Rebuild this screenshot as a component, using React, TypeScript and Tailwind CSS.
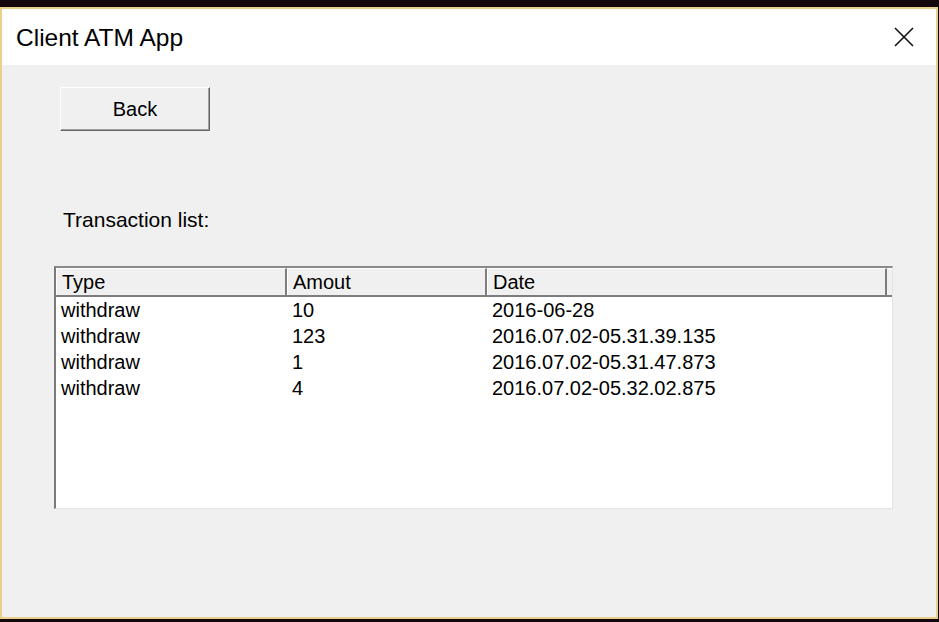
import React from "react";

const rows = [
  { type: "withdraw", amount: "10", date: "2016-06-28" },
  { type: "withdraw", amount: "123", date: "2016.07.02-05.31.39.135" },
  { type: "withdraw", amount: "1", date: "2016.07.02-05.31.47.873" },
  { type: "withdraw", amount: "4", date: "2016.07.02-05.32.02.875" },
];

export default function App() {
  return (
    <div
      className="w-[939px] h-[622px] bg-[#14080c] pt-[7px] pr-[1px] pb-[3px] overflow-hidden text-black"
      style={{ fontFamily: '"Liberation Sans", Arial, sans-serif' }}
    >
      <div className="w-[938px] h-[612px] border-2 border-[#ead08e] flex flex-col bg-[#f0f0f0]">
        {/* Title bar */}
        <div className="h-[56px] shrink-0 bg-white flex items-center justify-between pl-[14px] pr-[22px]">
          <span className="text-[24.5px] leading-none mt-[2px]">Client ATM App</span>
          <svg width="20" height="20" viewBox="0 0 20 20" className="mt-[-1px]">
            <path d="M1 1 L19 19 M19 1 L1 19" stroke="#111" strokeWidth="1.6" fill="none" />
          </svg>
        </div>

        {/* Content */}
        <div className="flex-1 flex flex-col pl-[52px] pt-[22px]">
          <button className="ml-[6px] w-[150px] h-[44px] bg-[#f0f0f0] border-t border-l border-t-white border-l-white border-r border-b border-r-[#646464] border-b-[#646464] shadow-[inset_-1px_-1px_0_#a0a0a0] text-[20px] leading-none flex items-center justify-center pb-[1px]">
            Back
          </button>

          <div className="ml-[9px] mt-[77px] text-[21px] leading-[24px]">Transaction list:</div>

          <div className="mt-[34px] w-[839px] h-[243px] bg-white border-t-2 border-l-2 border-t-[#8a8a8a] border-l-[#7a7a7a] border-b border-r border-b-[#e3e3e3] border-r-[#e3e3e3] flex flex-col">
            {/* header */}
            <div className="h-[29px] shrink-0 flex bg-[#f0f0f0] border-b-2 border-b-[#7d7d7d] text-[20px] leading-none">
              <div className="w-[231px] shrink-0 border-t border-l border-t-white border-l-white border-r-2 border-r-[#7d7d7d] pl-[5px] flex items-center">
                Type
              </div>
              <div className="w-[200px] shrink-0 border-t border-l border-t-white border-l-white border-r-2 border-r-[#7d7d7d] pl-[5px] flex items-center">
                Amout
              </div>
              <div className="w-[400px] shrink-0 border-t border-l border-t-white border-l-white border-r-2 border-r-[#7d7d7d] pl-[5px] flex items-center">
                Date
              </div>
              <div className="flex-1 border-t border-t-white" />
            </div>
            {/* rows */}
            <div className="flex flex-col">
              {rows.map((r, i) => (
                <div key={i} className="h-[26px] flex items-center text-[20px] leading-none pb-[1px]">
                  <div className="w-[231px] shrink-0 pl-[5px]">{r.type}</div>
                  <div className="w-[200px] shrink-0 pl-[5px]">{r.amount}</div>
                  <div className="w-[400px] shrink-0 pl-[5px]">{r.date}</div>
                </div>
              ))}
            </div>
          </div>
        </div>
      </div>
    </div>
  );
}
